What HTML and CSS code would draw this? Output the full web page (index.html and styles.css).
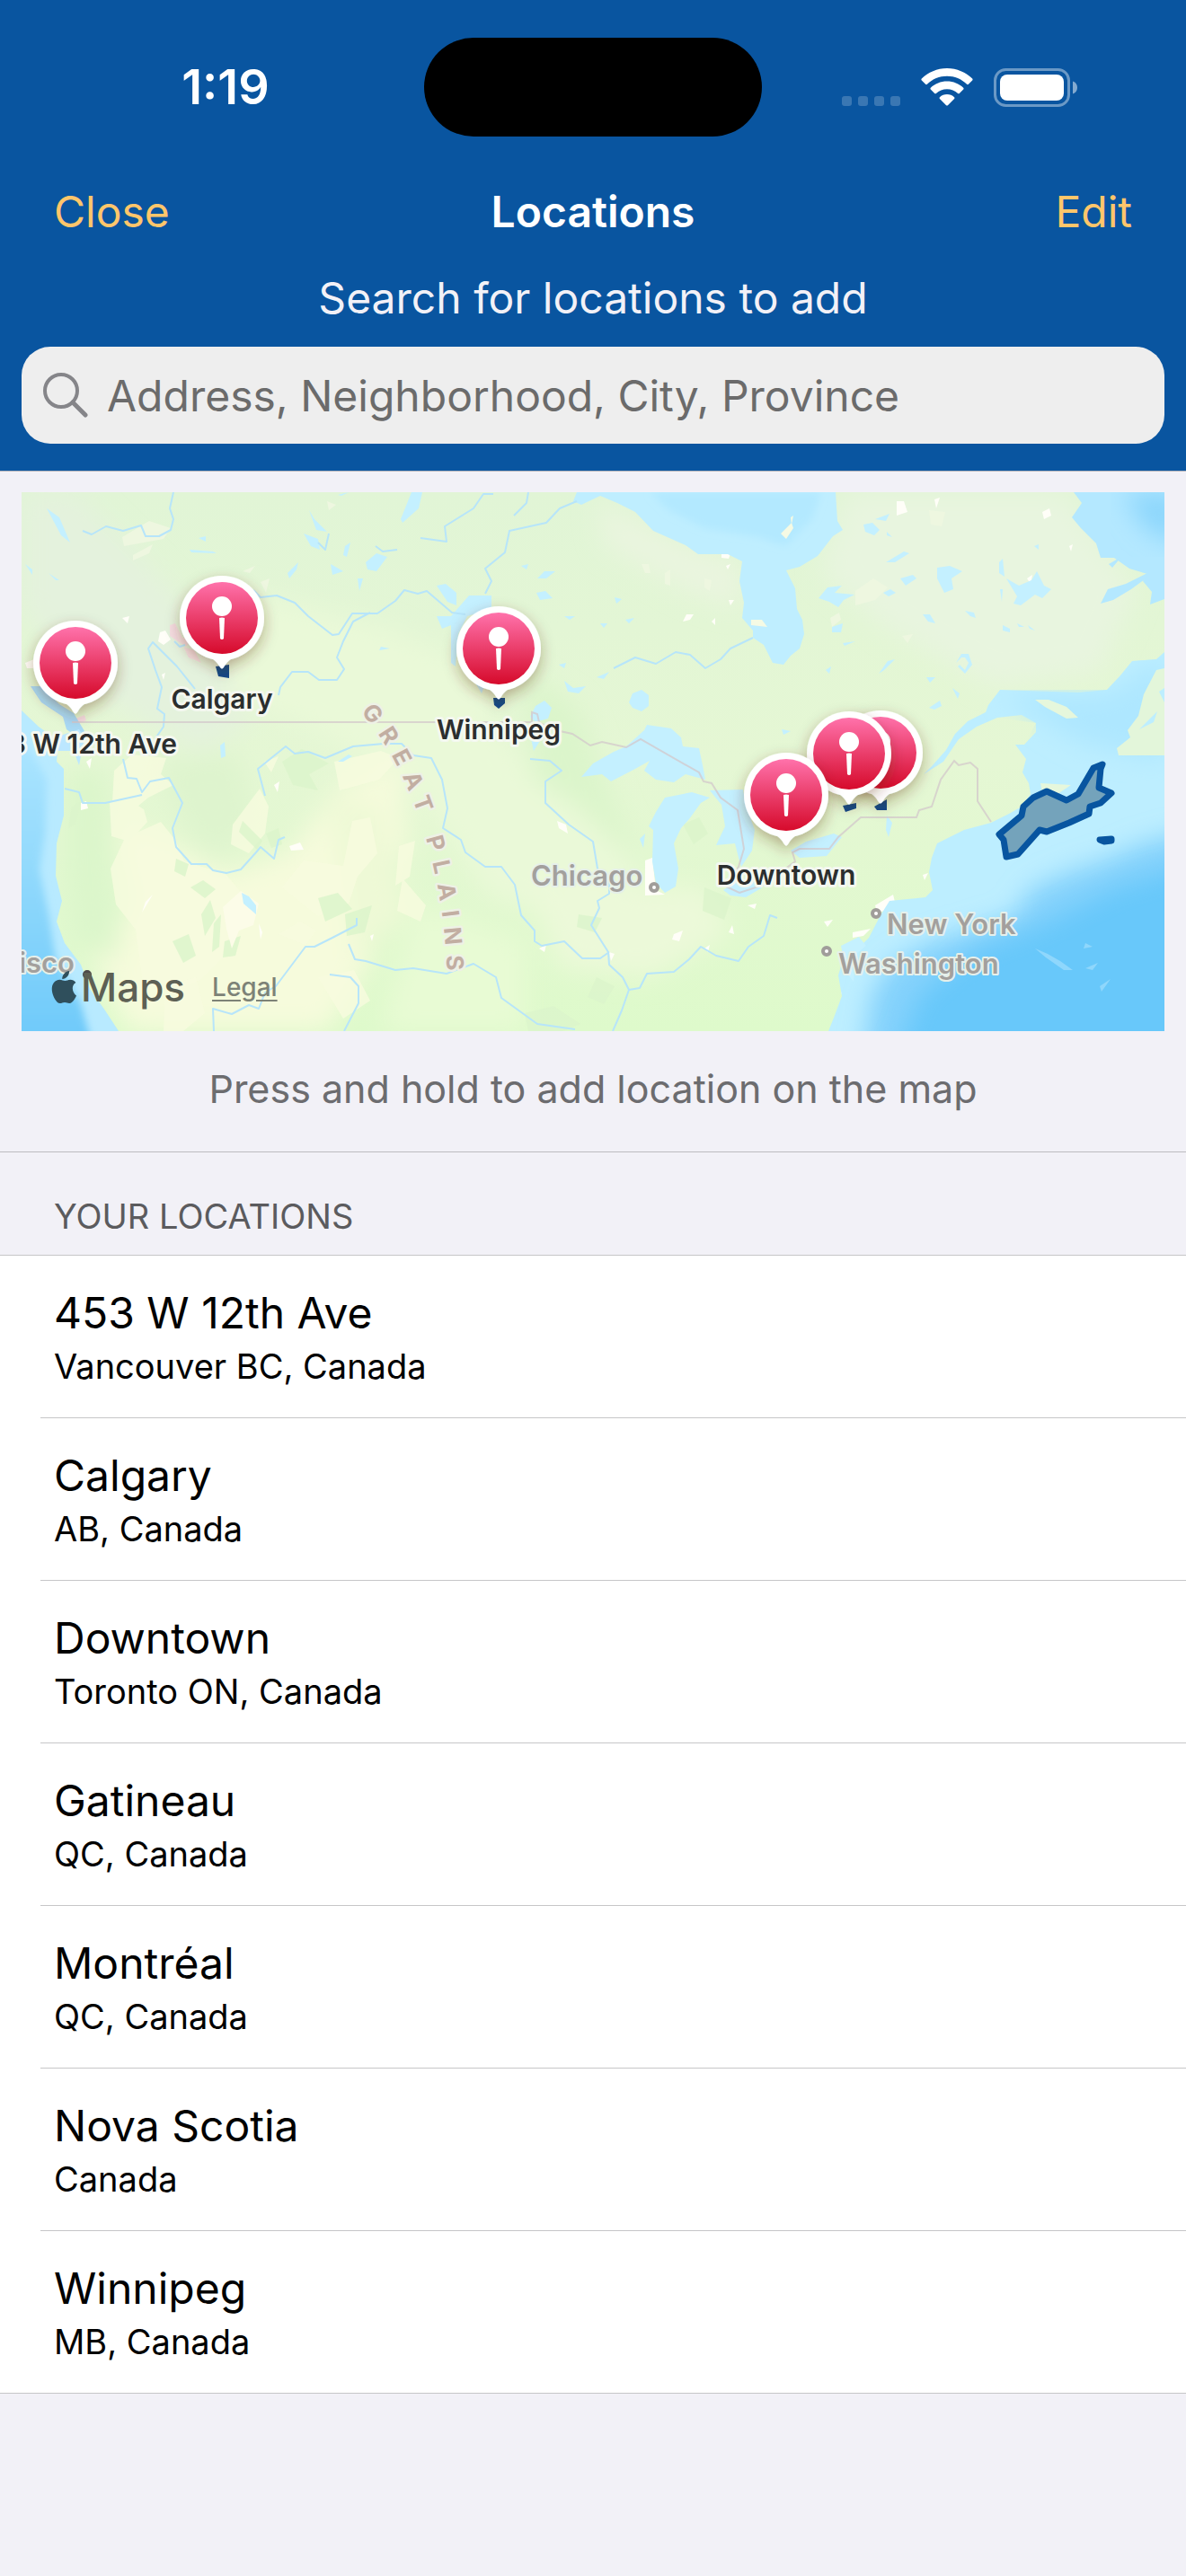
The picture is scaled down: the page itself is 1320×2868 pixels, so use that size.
FILE: index.html
```html
<!DOCTYPE html>
<html lang="en">
<head>
    <meta charset="UTF-8">
    <meta name="viewport" content="width=device-width, initial-scale=1.0">
    <title>Locations</title>
    <link rel="stylesheet" href="styles.css">
</head>
<body>
    <header class="top">
        <div class="status-bar">
            <span class="time">1:19</span>
            <div class="island"></div>
            <div class="status-icons">
                <svg class="signal" width="65" height="11" viewBox="0 0 65 11" fill="#fff" fill-opacity="0.2">
                    <rect x="0" width="11" height="11" rx="3"/>
                    <rect x="18" width="11" height="11" rx="3"/>
                    <rect x="36" width="11" height="11" rx="3"/>
                    <rect x="54" width="11" height="11" rx="3"/>
                </svg>
                <svg width="58" height="42" viewBox="0 0 58 42" fill="#fff">
                    <path d="M29 0C18 0 8 4.500 .8 11.600a1.300 1.300 0 0 0 0 1.800l4.300 4.400c.5.500 1.300.5 1.800 0C12.800 12 20.600 8.800 29 8.800S45.200 12 51.100 17.800c.5.500 1.300.5 1.800 0l4.300-4.400c.5-.5.5-1.300 0-1.800C50 4.500 40 0 29 0z"/>
                    <path d="M29 14.500c-7 0-13.400 2.700-18.200 7.200-.5.500-.5 1.300 0 1.800l4.400 4.400c.5.500 1.200.5 1.700 0 3.200-3 7.500-4.700 12.100-4.700s8.900 1.700 12.100 4.700c.5.500 1.200.5 1.700 0l4.400-4.400c.5-.5.5-1.300 0-1.800-4.800-4.500-11.200-7.200-18.200-7.200z"/>
                    <path d="M29 29c-3.100 0-6 1.200-8.100 3.200-.5.500-.5 1.200 0 1.700l7.200 7.300c.5.500 1.300.5 1.800 0l7.200-7.300c.5-.5.5-1.200 0-1.700C35 30.200 32.100 29 29 29z"/>
                </svg>
                <svg width="93" height="43" viewBox="0 0 93 43">
                    <rect x="1.500" y="1.500" width="82" height="40" rx="12" fill="none" stroke="#fff" stroke-opacity="0.400" stroke-width="3"/>
                    <rect x="7" y="7" width="71" height="29" rx="8" fill="#fff"/>
                    <path d="M88 14.500c3 1 5 3.600 5 7s-2 6-5 7z" fill="#fff" fill-opacity="0.500"/>
                </svg>
            </div>
        </div>
        <nav class="nav-bar">
            <button type="button" class="nav-button">Close</button>
            <h1>Locations</h1>
            <button type="button" class="nav-button nav-right">Edit</button>
        </nav>
        <label class="search-label" for="search">Search for locations to add</label>
        <div class="search-box">
            <svg width="50" height="50" viewBox="0 0 50 50" fill="none" stroke="#858589" stroke-width="4" stroke-linecap="round">
                <circle cx="20" cy="20" r="18"/>
                <path d="M33 33l14 14" stroke-width="5"/>
            </svg>
            <input type="text" id="search" name="search" placeholder="Address, Neighborhood, City, Province">
        </div>
    </header>

    <main>
        <div class="map">
            <svg class="map-canvas" viewBox="0 0 1272 600" preserveAspectRatio="xMidYMid slice">
                <defs>
                    <linearGradient id="pinFill" x1="0" y1="0" x2="0" y2="1">
                        <stop offset="0" stop-color="#ff72ab"/>
                        <stop offset="1" stop-color="#d60a2b"/>
                    </linearGradient>
                    <linearGradient id="pacific" x1="0" y1="0" x2="0" y2="1">
                        <stop offset="0" stop-color="#aee6ff"/>
                        <stop offset="1" stop-color="#6dc9f9"/>
                    </linearGradient>
                    <linearGradient id="land" x1="0" y1="0" x2="0" y2="1">
                        <stop offset="0" stop-color="#e1f5d6"/>
                        <stop offset="0.500" stop-color="#e5f7d4"/>
                        <stop offset="1" stop-color="#defacb"/>
                    </linearGradient>
                    <filter id="soft" x="-20%" y="-20%" width="140%" height="140%">
                        <feGaussianBlur stdDeviation="14"/>
                    </filter>
                    <filter id="shore" x="-20%" y="-20%" width="140%" height="140%">
                        <feGaussianBlur stdDeviation="4"/>
                    </filter>
                    <filter id="shadow" x="-40%" y="-40%" width="180%" height="190%">
                        <feDropShadow dx="0" dy="6" stdDeviation="8" flood-color="#5a2a10" flood-opacity="0.350"/>
                    </filter>
                    <clipPath id="pacificClip">
                        <path d="M0 243L19 261 41 277 39 300 47 308 47 360 39 391 38 427 45 455 39 478 48 502 66 526 76 553 93 577 108 600H0z"/>
                    </clipPath>
                    <clipPath id="atlanticClip">
                        <path d="M1272 178L1263 186 1236 188 1223 204 1208 220 1089 220 1076 237 1053 255 1029 287 1004 314 1026 300 1043 275 1086 251 1129 257 1116 281 1118 297 1121 324 1113 350 1079 368 1019 391 1010 423 1014 443 966 455 943 496 916 514 909 538 913 561 898 600H1272z"/>
                    </clipPath>
                    <g id="pin">
                        <g filter="url(#shadow)">
                            <circle r="47" fill="#fff"/>
                            <path d="M-20 41C-8 45-5 50-2 55q2 3 4 0C5 50 8 45 20 41z" fill="#fff"/>
                        </g>
                        <circle r="40" fill="url(#pinFill)"/>
                        <circle cy="-13" r="11" fill="#fff"/>
                        <path d="M-3 0q3-1 6 0L2 23q-2 2-4 0z" fill="#fff"/>
                    </g>
                </defs>

                <rect width="1272" height="600" fill="url(#land)"/>

                <!-- dry and mountain ground -->
                <g filter="url(#soft)">
                    <path d="M0 0H60L150 90 240 190 260 250 200 290 90 230 0 130z" fill="#e4f2dd"/>
                    <path d="M240 110L400 150 520 200 520 260 690 420 620 480 520 450 440 330 320 260 230 230z" fill="#eaf9d8"/>
                    <path d="M640 10L740 60 800 80 800 130 740 110 650 60z" fill="#eaf5df"/>
                    <path d="M920 0H1160L1240 110 1200 200 1080 215 960 150 890 90z" fill="#e8f5df"/>
                    <path d="M110 370L170 395 230 425 300 400 350 330 420 300 430 400 380 430 390 520 340 600H120L80 520 130 460z" fill="#f6fbdc"/>
                    <path d="M560 430L760 440 790 490 700 540 600 530z" fill="#ecf9d9"/>
                    <path d="M150 300L240 290 260 370 210 410 180 370z" fill="#def4ce"/>
                    <path d="M560 200L620 240 660 350 690 420 620 350 570 320z" fill="#dbf5cb"/>
                    <path d="M340 340L400 350 430 470 370 520z" fill="#eef9d6"/>
                    <path d="M440 460L560 500 560 600H400z" fill="#e8fbd4"/>
                    <path d="M50 310L95 310 100 420 110 520 60 500 50 420z" fill="#dbf6cb"/>
                </g>
                <g fill="#f8fbde" fill-opacity="0.800">
                    <path d="M103 310l20-18 38 4-6 18 14 12-28 14-12 10-28-4zM98 345l16-6 22 14 4 14-20 22-20-6zM115 385l40-18 16 20 10 24 46 14 20 24-14 60-34 34-30 12-34-8-8-60-22-28-6-40zM235 370l30-40 10 20-4 30-18 22-20-10zM290 440l24-30 44 6 10-50 20-4 8 40-22 26-10 30-34 14zM348 300l52-12 20 8-22 24-44 12z"/>
                    <path d="M420 394l18-6-6 40-16 10zM424 430l26 30-6 18-26-12zM330 540l40-8 18 34-30 20zM286 492l24-14 18 10-12 16zM270 300l16-6-8 18zM160 550l34-10 10 40-24 20h-22z"/>
                </g>
                <g fill="#dcf4cb" fill-opacity="0.850">
                    <path d="M172 408l14 6-4 14-12-6zM188 440l14-8 14 10-12 10zM200 470l10-16 6 20-12 20zM168 500l18-8 8 24-14 8zM226 500l18-6-6 22-14 2zM214 480l8-10-2 36-8 6zM246 366l22 22-6 10-20-20zM290 300l22-14 30 16-22 12 10 18-28-6zM272 380l14-6 4 18-12 4zM56 350l10-6-6 26-8 4zM330 452l22-6 16 18-30 14zM360 470l30-10-8 30-20 4z"/>
                    <path d="M620 470l26 4-8 16-20-6zM560 580l32-8 30 20-20 8h-38zM760 440l30 12-8 24-24-10zM640 540l20 10-12 20-18-8zM736 370l18-8 10 18-16 12z"/>
                </g>
                <g fill="#eef7e0">
                    <path d="M112 50l30-18 24 8-8 12-44 8zM124 70l22-12-4 10-18 8zM246 88l14-6-6 8zM266 100l10-4-4 16zM340 10l10 4-8 6zM690 80l8 0 2 10-6 0zM716 90l6-4 0 18-6-2zM760 96l8 2-2 12-6-4zM980 160l12-2-6 10zM928 110l20-14 16 10-14 14-22 6zM1010 20l18 2-4 16-12-2zM900 140l10-6 2 8-10 8z"/>
                </g>
                <path d="M224 462l20-18 20 14-6 24-16 6-8 20-6-22z" fill="#fcfce8"/>
                <!-- snow and cities -->
                <g fill="#fffef8">
                    <path d="M112 140l8-2-2 8zM154 156l6-2 6 10-8 6-6-4zM156 203l4-2-2 8zM4 190l10-4-1 10-7 0zM66 346l6-2 2 8-8 2zM72 300l6-4-2 12zM138 456l8-8-12 20zM264 480l4 10-2 8zM388 494l4-2-2 8zM298 394l12-4 4 8-14 1zM281 326l6-4-2 12zM694 410l8-3 4 36 10 5-22 1zM596 366l10 4 2 10-10-6zM726 492l10-4-4 12-8-2zM576 508l8-4-2 8zM654 512l6 2-4 8zM787 490l4-8 2 10zM760 508l6-4-2 8zM808 460l10-2-2 6zM779 68l10 0-2 6-8-1zM784 82l5-2-3 6zM740 136l8 0-4 6-8 2zM768 144l4-4 0 8zM787 120l6 0-4 6z"/>
                    <path d="M950 460l20-12 2 8 12 0-12 8-20 4zM925 490l20-4-8 8-12 2zM893 478l10-2-6 8zM912 556l6 2-2 12zM1014 442l8-2-4 6zM1003 426l6-2-4 8zM1016 8l6-2-4 12zM1136 22l8-4 2 8-8 4zM1166 60l4-2-2 8zM974 10l8 0 4 12-12 4zM1119 96l6-4-2 10z"/>
                </g>
                <path d="M165 148l6-2 8 16 10 2-6 8-18-12zM180 172l12 4 8 14-14-6zM60 252l10-4 2 6-10 4z" fill="#f3dde0"/>

                <!-- water -->
                <path d="M0 243L19 261 41 277 39 300 47 308 47 360 39 391 38 427 45 455 39 478 48 502 66 526 76 553 93 577 108 600H0z" fill="#b8eaff"/>
                <g clip-path="url(#pacificClip)">
                    <path d="M-20 265L12 290 28 320 26 380 20 420 30 470 38 520 66 570 80 620H-20z" fill="url(#pacific)" filter="url(#shore)"/>
                </g>
                <path d="M10 216l12 0 20 20 16 10 12 20-6 8-14-10-4-14-24-16z" fill="#a9daf5"/>
                <path d="M34 274l30-10 6 10-6 30-6-16-22 0z" fill="#bce7ff"/>

                <path d="M618 0L614 10 623 14 644 4 663 12 683 22 703 43 739 59 753 69 786 69 802 77 799 99 804 123 802 140 814 154 814 162 826 170 836 190 848 192 856 182 866 174 871 158 869 142 863 130 861 107 851 87 866 83 886 71 903 49 914 42 908 32 906 0z" fill="#bfeeff"/>
                <path d="M700 0H890L880 30 850 60 820 50 760 40 720 20z" fill="#b3e9ff" filter="url(#shore)"/>
                <path d="M845 46l12-12 2 6-8 12zM856 28l3-2-2 10zM812 142l12 0 6 8-18-2z" fill="#f5fae4"/>

                <path d="M1171 0L1180 12 1169 28 1179 40 1196 57 1201 73 1216 73 1233 85 1253 91 1248 99 1258 111 1256 125 1272 119V0z" fill="#b4e8ff"/>
                <path d="M1225 0H1290V60L1250 40z" fill="#8bd6fc" filter="url(#soft)"/>
                <path d="M1201 124l8-16 20-6 24-12 4 2-22 16-20 12zM1210 80l14-8-10 12z" fill="#b4e8ff"/>

                <path d="M1272 178L1263 186 1236 188 1223 204 1208 220 1176 223 1089 220 1076 237 1073 245 1053 255 1039 269 1029 287 1014 304 1004 314 1026 300 1043 275 1063 261 1086 251 1113 248 1129 257 1129 267 1116 281 1106 281 1118 297 1114 312 1121 324 1123 336 1113 350 1099 358 1079 368 1049 376 1019 391 1013 407 1010 423 1014 443 1006 451 966 455 956 471 943 496 933 506 916 514 909 538 913 561 904 585 898 600H1272z" fill="#bdeeff"/>
                <g clip-path="url(#atlanticClip)">
                    <path d="M1090 225L1210 225 1272 180V300L1180 280 1130 250z" fill="#aee7ff" filter="url(#soft)"/>
                    <path d="M1310 375L1246 392 1206 410 1163 424 1123 442 1104 472 1013 500 966 526 946 560 936 630H1310z" fill="#84d2fc" filter="url(#soft)"/>
                    <path d="M1320 410L1220 440 1140 480 1060 510 1000 560 970 640H1320z" fill="#68c8fa" filter="url(#soft)"/>
                </g>
                <path d="M1128 508l14 6 14 8 14 10-10 0-20-14zM1184 502l8 4-10 2zM1184 530l14-6-6 8zM1200 550l12-8-10 14z" fill="#8fd7fc"/>
                <path d="M1272 196L1263 198 1249 225 1243 249 1231 265 1234 273 1219 285 1221 293 1272 293z" fill="#e3f6da"/>
                <path d="M1128 231L1143 231 1163 239 1176 251 1163 252 1139 239zM1134 324l34 2-18 12-14-4z" fill="#e6f7dc"/>
                <path d="M1244 264l20-20-4 12zM1266 222l6-4v16z" fill="#bdeeff"/>
                <path d="M912 505l20-10 8 10-12 10-2 30-8-10z" fill="#c5f1ff"/>

                <g fill="#c4f0ff">
                    <path d="M623 317L636 302 659 289 673 283 693 265 696 259 723 263 734 273 736 283 754 285 758 304 761 320 739 314 726 323 706 320 693 310 699 299 683 308 656 322 646 314z"/>
                    <path d="M716 340L746 334 766 340 756 346 743 364 734 374 726 391 731 419 728 439 716 446 706 435 702 411 703 376 698 372 706 356z"/>
                    <path d="M766 332L803 331 806 348 816 376 813 399 801 417 798 407 794 391 773 393 783 372 779 348z"/>
                    <path d="M781 443L799 431 823 429 843 419 823 441 806 451 789 449z"/>
                    <path d="M856 399L873 389 904 380 913 384 896 405 866 407z"/>
                    <path d="M498 115L523 115 523 130 496 138 486 158 483 194 478 190 478 138zM462 138l16 0 0 10-10 4zM462 104l10-2 12 10 0 14-10-4zM506 214l10 0-4 10z"/>
                    <path d="M680 224l10-4 8 6 0 12-8 6-10-4-4-6zM572 238l10-6 8 8-4 12-14 4-6-6zM566 270l14 2-10 16zM604 210l10 8 14-2-8 8-12-2zM573 112l10-2 8 8-14 2zM574 96l8-8 12 0-10 8zM556 82l8-2-2 6zM604 138l12 0-6 4zM644 146l8 0-4 5zM672 142l10-2-6 6zM660 117l8 2-6 5zM598 192l8-2-2 6zM640 206l14-6-6 8zM688 386l6-6-2 16z"/>
                    <path d="M422 30l12-30h12l-4 18-18 16zM28 18l14 10 12 28-10-8zM4 80l8 6 0 6zM30 90l12 8-4 0zM187 64l26 2 4 2-28-1zM197 51l8-2 0 6zM314 46l16 6 2 12-10-4zM320 20l6 10 14 14-12-2zM383 78l12-10 12 4-12 16-10-2zM344 80l14 8-12 4zM296 90l12-12-2 8-8 10zM374 96l6 0-4 14zM360 60l6-4-4 16-4-2zM352 3l12-3-8 4zM221 282l5-4 1 16-5 2zM400 172l10 2-12 2zM245 446l8 4 8 10 0 10-14-12zM352 300l12-8 4 2-10 6z"/>
                    <path d="M937 36l10-2 8 8-6 6-10-4zM950 30l16-6-4 8zM963 44l6 6-6-2zM962 78l20-12 6 2-16 10zM978 96l14-4 4 4-12 8zM1019 84l14-2 14 6-12 8 2 12-10 4-8-16zM887 118l10-12 16-2-8 8 22 2-12 6-6 8-10-6zM959 112l8-4 6 4-8 4zM1088 78l4-4 2 20-6-4zM1096 96l14 8 14-6 6-10 8 16 8 4-10 10-8-4-16 12-8-2 4-8zM1089 108l3 0-1 14zM1003 136l8 0 6 10-8-2zM1050 132l10 2 2 6-6-2zM1092 148l8 4 0 4-8-2zM1108 146l8 4-6 0zM1120 148l8 6-6-2zM902 150l12-4-2 10-10 0zM914 168l14-2-12 5zM954 202l10-14 8-2-12 12zM1007 206l10 0-6 6zM1036 218l8 6-2 6zM1010 240l12-8 2 6-8 4zM963 360l6 8-4 16-3-8zM1127 60l5-2 0 6zM895 198l6-4-2 8zM846 264l10 2-8 4z"/>
                    <path d="M1040 190l6-10 8 0 4 12-8 10-8-8 2-2 6 6 4-8-4-6-4 0z"/>
                </g>

                <g fill="none" stroke="#b7e5fa" stroke-width="2" stroke-linejoin="round">
                    <polyline points="169,0 165,18 169,30 166,42 153,49 138,49 133,37 113,43 94,38 78,47 68,43"/>
                    <polyline points="258,109 266,117 284,115 304,123 319,138 346,159 353,158 368,135 396,135 416,121 426,109 441,113 451,110 479,134 494,136"/>
                    <polyline points="388,134 369,144 358,166 351,184 359,197 351,209 331,209 319,200 301,200 288,217 286,226"/>
                    <polyline points="193,219 173,194 146,167 141,174 149,198 156,217 151,241 159,247 158,261 149,274"/>
                    <polyline points="113,297 118,318 128,319 134,334 143,322 164,318 179,346 168,374 172,395 189,414 206,414 213,421 228,424 244,420 261,401 266,395 281,408 286,387 293,384"/>
                    <polyline points="48,330 64,334 68,346 93,346 134,337"/>
                    <polyline points="170,166 176,172 182,170"/>
                    <polyline points="271,338 263,308 294,283 304,291 319,289 338,296 369,283 403,280 423,280 436,293 456,296 468,320 474,352 469,374 489,387 494,401 516,417 534,417 549,437 556,471 571,488 571,500 579,505 604,500 624,519 644,519 654,512"/>
                    <polyline points="566,297 588,299 601,310 583,322 583,346 609,370 636,389 641,419 654,435 654,447 641,455 643,463 634,482 653,512 654,526 669,540 676,554 668,577 658,600"/>
                    <polyline points="676,554 688,552 696,536 726,534 743,520 756,506 773,516 798,522 809,506 826,494 833,471 841,474"/>
                    <polyline points="214,600 213,575 234,581 253,571 264,575 271,557 283,550 316,506 326,506 346,496 373,482 373,474"/>
                    <polyline points="343,537 366,540 375,550 375,569 359,600"/>
                    <polyline points="364,503 371,520 383,522 416,532 436,530 473,536 503,525 528,540 534,563 574,592 616,598"/>
                    <polyline points="618,10 599,18 584,34 543,43 538,67 516,85 523,99 516,113"/>
                    <polyline points="525,2 514,2 503,18 471,38 473,55 444,51"/>
                    <polyline points="564,0 562,12 548,26"/>
                    <polyline points="659,196 683,184 706,191 728,178 744,181 761,196 778,186 789,174 814,162"/>
                    <polyline points="394,60 402,66 418,64"/>
                    <polyline points="330,56 338,64 342,46"/>
                </g>

                <polyline points="56,256 568,256 568,245 574,247 576,256 590,264 613,269 633,282 646,278 673,284 689,275 754,312 759,322 768,324 778,340 797,354 804,397 798,417 784,439 799,446 826,437 861,411 858,401 866,397 899,397 909,384 934,362 996,362 999,354 1013,350 1023,320 1038,299 1043,304 1056,301 1064,308 1064,344 1079,367" fill="none" stroke="#d3c8cb" stroke-opacity="0.750" stroke-width="2"/>

                <!-- saved areas -->
                <g fill="#74a3bb" stroke="#0855a0" stroke-width="7" stroke-linejoin="round">
                    <path d="M1203 303L1193 307 1176 336 1163 343 1141 333 1126 340 1115 350 1113 360 1088 381 1093 387 1096 406 1109 403 1133 376 1141 378 1166 368 1188 358 1189 350 1201 346 1213 335 1199 329 1201 308z"/>
                    <path d="M1200 387l5 2 8-1 0-2z"/>
                </g>
                <g fill="#124a8a">
                    <path d="M216 194l15-2v15l-12-2zM525 229h13v6l-7 6-5-4zM914 349l15-3v6l-12 4zM949 350l14-8v12h-11z"/>
                </g>

                <g class="city-label">
                    <text x="567" y="438">Chicago</text>
                    <text x="963" y="492">New York</text>
                    <text x="909" y="536">Washington</text>
                    <text x="59" y="535" text-anchor="end">San Francisco</text>
                </g>
                <g fill="#fff" stroke="#a09d9a" stroke-width="4">
                    <circle cx="704" cy="440" r="4"/>
                    <circle cx="951" cy="469" r="4"/>
                    <circle cx="896" cy="511" r="4"/>
                    <circle cx="73" cy="537" r="3" stroke="#4d4a4a"/>
                </g>
                <path id="plains" d="M377 245C420 290 474 400 474 560" fill="none"/>
                <text class="region-label"><textPath href="#plains">GREAT PLAINS</textPath></text>

                <use href="#pin" x="60" y="190"/>
                <use href="#pin" x="223" y="140"/>
                <use href="#pin" x="531" y="174"/>
                <use href="#pin" x="956" y="290"/>
                <use href="#pin" x="921" y="291"/>
                <use href="#pin" x="851" y="337"/>
                <g class="pin-label">
                    <text x="60" y="291">453 W 12th Ave</text>
                    <text x="223" y="241">Calgary</text>
                    <text x="531" y="275">Winnipeg</text>
                    <text x="851" y="437">Downtown</text>
                </g>
            </svg>
            <div class="attribution">
                <svg width="30" height="36" viewBox="0 0 30 36">
                    <path d="M21 0c.3 2.400-.7 4.600-2.100 6.300-1.500 1.700-3.600 2.800-5.600 2.700-.3-2.300.8-4.700 2.200-6.100C17 1.200 19.200.1 21 0zM29 27.600c-.8 1.900-1.300 2.700-2.400 4.300-1.500 2.300-3.300 4-5.300 4-2 .1-2.800-1-5.300-1s-3.200 1.100-5.200 1.100c-2.100 0-3.800-1.900-5.300-4.100C1.300 25.500.6 17.400 3.600 13.500c1.800-2.500 4.400-3.700 6.800-3.700 2.500 0 4 1.300 6 1.300 1.900 0 3.100-1.300 6-1.300 2.100 0 4.400 1.200 6 3.200-5.300 2.900-4.400 10.500.6 14.600z" fill="#2f4f5c"/>
                </svg>
                <span class="maps-name">Maps</span>
                <a href="#legal">Legal</a>
            </div>
        </div>
        <p class="hint">Press and hold to add location on the map</p>

        <h2>Your Locations</h2>
        <ul class="locations">
            <li>
                <span class="name">453 W 12th Ave</span>
                <span class="region">Vancouver BC, Canada</span>
            </li>
            <li>
                <span class="name">Calgary</span>
                <span class="region">AB, Canada</span>
            </li>
            <li>
                <span class="name">Downtown</span>
                <span class="region">Toronto ON, Canada</span>
            </li>
            <li>
                <span class="name">Gatineau</span>
                <span class="region">QC, Canada</span>
            </li>
            <li>
                <span class="name">Montréal</span>
                <span class="region">QC, Canada</span>
            </li>
            <li>
                <span class="name">Nova Scotia</span>
                <span class="region">Canada</span>
            </li>
            <li>
                <span class="name">Winnipeg</span>
                <span class="region">MB, Canada</span>
            </li>
        </ul>
    </main>
</body>
</html>
```

FILE: styles.css
```css
* {
    box-sizing: border-box;
}
body {
    margin: 0;
    font-family: Inter, "Liberation Sans", sans-serif;
    background-color: #f2f1f7;
    color: #000;
}
.top {
    background-color: #0955a0;
    padding: 42px 24px 30px;
    border-bottom: 1px solid #b6b5ba;
}

/* Status bar */
.status-bar {
    display: grid;
    grid-template-columns: 1fr 376px 1fr;
    align-items: center;
    color: #fff;
}
.time {
    font-size: 54px;
    font-weight: 600;
    line-height: 60px;
    text-align: center;
    padding-left: 6px;
}
.island {
    height: 110px;
    border-radius: 55px;
    background-color: #000;
}
.status-icons {
    display: flex;
    justify-content: flex-end;
    align-items: center;
    gap: 23px;
    padding-right: 97px;
}
.signal {
    align-self: flex-end;
    margin-bottom: 1px;
}

/* Navigation */
.nav-bar {
    display: grid;
    grid-template-columns: 1fr auto 1fr;
    align-items: center;
    padding: 0 36px;
    margin-top: 54px;
}
.nav-button {
    border: none;
    background: none;
    padding: 0;
    font-family: inherit;
    font-size: 48px;
    line-height: 60px;
    color: #ffc66b;
    text-align: left;
    cursor: pointer;
}
.nav-right {
    text-align: right;
}
h1 {
    margin: 0;
    font-size: 48px;
    font-weight: 600;
    line-height: 60px;
    color: #fff;
}
.search-label {
    display: block;
    margin-top: 36px;
    font-size: 48px;
    line-height: 60px;
    text-align: center;
    color: #f2f1f7;
}
.search-box {
    display: flex;
    align-items: center;
    gap: 21px;
    height: 108px;
    margin-top: 24px;
    padding: 0 24px;
    border-radius: 32px;
    background-color: #eee;
}
.search-box input {
    flex: 1;
    min-width: 0;
    border: none;
    outline: none;
    padding: 2px 0 0;
    background: none;
    font-family: inherit;
    font-size: 48px;
    line-height: 60px;
}
.search-box input::placeholder {
    color: #6b6b6b;
    opacity: 1;
}

/* Map */
.map {
    position: relative;
    margin: 23px 24px 0;
}
.map-canvas {
    display: block;
    width: 100%;
    overflow: hidden;
}
.pin-label {
    font-size: 30px;
    font-weight: 600;
    text-anchor: middle;
    fill: #2b2e2e;
    stroke: #f4f8f0;
    stroke-width: 6px;
    stroke-linejoin: round;
    paint-order: stroke;
}
.city-label {
    font-size: 31px;
    font-weight: 600;
    fill: #a3a09d;
    stroke: #e6f0ea;
    stroke-width: 4px;
    stroke-linejoin: round;
    paint-order: stroke;
}
.region-label {
    font-size: 26px;
    font-weight: 700;
    letter-spacing: 11px;
    fill: #c2aea2;
    stroke: #eef1e6;
    stroke-width: 5px;
    stroke-linejoin: round;
    paint-order: stroke;
}
.attribution {
    position: absolute;
    left: 32px;
    bottom: 24px;
    display: flex;
    align-items: center;
    color: #5d6054;
}
.maps-name {
    margin-left: 4px;
    font-size: 44px;
    font-weight: 500;
    line-height: 50px;
}
.attribution a {
    margin-left: 30px;
    font-size: 28px;
    font-weight: 500;
    color: #7d8277;
    text-underline-offset: 4px;
}
.hint {
    margin: 0;
    padding: 38px 24px 44px;
    font-size: 43px;
    line-height: 52px;
    text-align: center;
    color: #6c6c6f;
    border-bottom: 1px solid #bcbbc0;
}

/* List */
h2 {
    margin: 0;
    padding: 47px 60px 19px;
    font-size: 38px;
    font-weight: 400;
    line-height: 48px;
    text-transform: uppercase;
    color: #5b5b5e;
    border-bottom: 1px solid #c6c6c8;
}
.locations {
    margin: 0;
    padding: 0 0 0 45px;
    list-style: none;
    background-color: #fff;
    border-bottom: 1px solid #c6c6c8;
}
.locations li {
    display: flex;
    flex-direction: column;
    gap: 5px;
    padding: 34px 15px 33px;
}
.locations li + li {
    border-top: 1px solid #c6c6c8;
}
.name {
    font-size: 48px;
    line-height: 60px;
}
.region {
    font-size: 38px;
    line-height: 48px;
}
```
